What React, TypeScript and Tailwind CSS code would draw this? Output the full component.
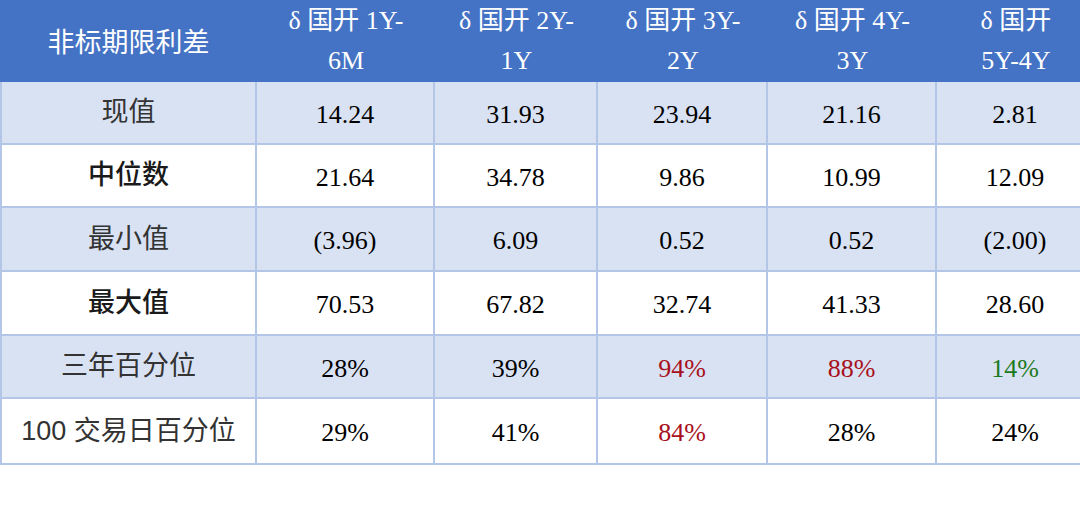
import React from 'react';

const widths = ['w-[257px]', 'w-[178px]', 'w-[163px]', 'w-[170px]', 'w-[169px]', 'w-[158px]'];

const headers: React.ReactNode[] = [
  <>δ 国开 1Y-<br />6M</>,
  <>δ 国开 2Y-<br />1Y</>,
  <>δ 国开 3Y-<br />2Y</>,
  <>δ 国开 4Y-<br />3Y</>,
  <>δ 国开<br />5Y-4Y</>,
];

type Row = {
  label: string;
  bold?: boolean;
  shaded: boolean;
  height: string;
  values: { v: string; c?: string }[];
};

const RED = 'text-[#a8101c]';
const GREEN = 'text-[#1d7a1d]';

const rows: Row[] = [
  { label: '现值', shaded: true, height: 'h-[63px]', values: [{ v: '14.24' }, { v: '31.93' }, { v: '23.94' }, { v: '21.16' }, { v: '2.81' }] },
  { label: '中位数', bold: true, shaded: false, height: 'h-[63px]', values: [{ v: '21.64' }, { v: '34.78' }, { v: '9.86' }, { v: '10.99' }, { v: '12.09' }] },
  { label: '最小值', shaded: true, height: 'h-[64px]', values: [{ v: '(3.96)' }, { v: '6.09' }, { v: '0.52' }, { v: '0.52' }, { v: '(2.00)' }] },
  { label: '最大值', bold: true, shaded: false, height: 'h-[64px]', values: [{ v: '70.53' }, { v: '67.82' }, { v: '32.74' }, { v: '41.33' }, { v: '28.60' }] },
  { label: '三年百分位', shaded: true, height: 'h-[63px]', values: [{ v: '28%' }, { v: '39%' }, { v: '94%', c: RED }, { v: '88%', c: RED }, { v: '14%', c: GREEN }] },
  { label: '100 交易日百分位', shaded: false, height: 'h-[66px]', values: [{ v: '29%' }, { v: '41%' }, { v: '84%', c: RED }, { v: '28%' }, { v: '24%' }] },
];

export default function App() {
  return (
    <div className="w-[1080px] h-[506px] overflow-hidden bg-white">
      <div className="w-[1095px]">
        {/* header */}
        <div className="flex h-[82px] bg-[#4472c4] text-white">
          <div
            className={`${widths[0]} flex items-center justify-center pt-[4px] text-[27px] font-['Liberation_Sans','Noto_Sans_CJK_SC',sans-serif]`}
          >
            非标期限利差
          </div>
          {headers.map((h, i) => (
            <div
              key={i}
              className={`${widths[i + 1]} flex items-center justify-center text-center text-[26px] leading-[40px] font-['Liberation_Serif','Noto_Sans_CJK_SC',serif]`}
            >
              <div>{h}</div>
            </div>
          ))}
        </div>

        {/* body */}
        {rows.map((r, ri) => (
          <div
            key={ri}
            className={`flex ${r.height} border-l-2 border-b-2 border-[#b4c6e7] ${r.shaded ? 'bg-[#d9e2f3]' : 'bg-white'}`}
          >
            <div
              className={`w-[255px] shrink-0 flex items-center justify-center border-r-2 border-[#b4c6e7] text-[27px] font-['Liberation_Sans','Noto_Sans_CJK_SC',sans-serif] ${r.bold ? 'font-medium text-[#1a1a1a]' : 'text-[#333333]'}`}
            >
              {r.label}
            </div>
            {r.values.map((cell, ci) => (
              <div
                key={ci}
                className={`${widths[ci + 1]} shrink-0 flex items-center justify-center pt-[3px] border-r-2 border-[#b4c6e7] text-[26px] font-['Liberation_Serif',serif] ${cell.c ?? 'text-black'}`}
              >
                {cell.v}
              </div>
            ))}
          </div>
        ))}
      </div>
    </div>
  );
}
